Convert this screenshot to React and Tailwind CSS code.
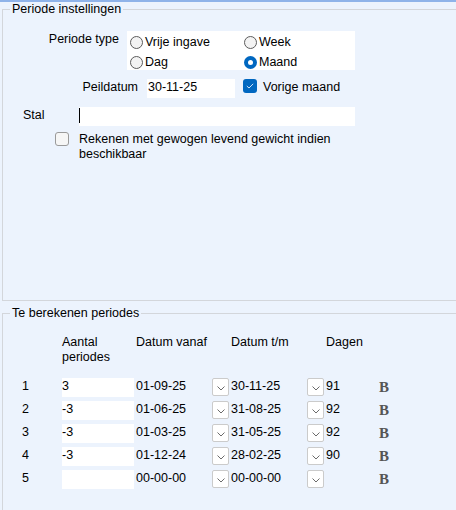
import React from "react";

const Radio = ({ checked, label }) => (
  <div className="flex items-center pl-[3px] h-[15px]">
    {checked ? (
      <span className="w-[13px] h-[13px] rounded-full bg-[#0067c0] flex items-center justify-center">
        <span className="w-[5px] h-[5px] rounded-full bg-white" />
      </span>
    ) : (
      <span className="w-[13px] h-[13px] rounded-full border border-[#5c5c5c] bg-[#f3f3f3]" />
    )}
    <span className="ml-[2px]">{label}</span>
  </div>
);

const Dropdown = () => (
  <div className="w-[17px] h-[18px] border border-[#cbcbcb] rounded-[2px] bg-white flex items-center justify-center">
    <svg width="8" height="5" viewBox="0 0 8 5" className="mt-[2px]">
      <polyline points="0.5,0.5 4,4 7.5,0.5" fill="none" stroke="#6b6b6b" strokeWidth="1" />
    </svg>
  </div>
);

const rows = [
  { n: "1", aantal: "3", van: "01-09-25", tm: "30-11-25", dagen: "91" },
  { n: "2", aantal: "-3", van: "01-06-25", tm: "31-08-25", dagen: "92" },
  { n: "3", aantal: "-3", van: "01-03-25", tm: "31-05-25", dagen: "92" },
  { n: "4", aantal: "-3", van: "01-12-24", tm: "28-02-25", dagen: "90" },
  { n: "5", aantal: "", van: "00-00-00", tm: "00-00-00", dagen: "" },
];

export default function App() {
  return (
    <div className="w-full h-[510px] overflow-hidden bg-[#ecf3fd] text-black text-[12.5px] leading-[15px] font-['Liberation_Sans',Arial,sans-serif]">
      <div className="h-[2px] bg-[#8fb3e9]" />

      {/* Periode instellingen */}
      <fieldset className="ml-[2px] h-[299px] border border-r-0 border-[#d3d6db] min-w-0">
        <legend className="ml-[7px] px-[2px] leading-[14px]">Periode instellingen</legend>

        <div className="flex mt-[15px]">
          <div className="w-[116px] text-right pt-[1px]">Periode type</div>
          <div className="ml-[8px] w-[228px] h-[39px] bg-white pt-[4px] grid grid-cols-[114px_1fr] gap-y-[5px]">
            <Radio label="Vrije ingave" />
            <Radio label="Week" />
            <Radio label="Dag" />
            <Radio checked label="Maand" />
          </div>
        </div>

        <div className="flex items-start mt-[9px] h-[19px]">
          <div className="w-[135px] text-right leading-[17px]">Peildatum</div>
          <div className="ml-[9px] w-[88px] h-[19px] bg-white pl-[1px] leading-[17px]">30-11-25</div>
          <div className="ml-[8px] w-[14px] h-[14px] rounded-[3px] bg-[#0067c0] flex items-center justify-center">
            <svg width="8" height="6" viewBox="0 0 8 6">
              <polyline points="0.8,3 3,5 7.2,0.8" fill="none" stroke="#cfe2f7" strokeWidth="1" />
            </svg>
          </div>
          <div className="ml-[6px] leading-[16px]">Vorige maand</div>
        </div>

        <div className="flex items-start mt-[9px]">
          <div className="w-[76px] pl-[20px] leading-[17px]">Stal</div>
          <div className="w-[276px] h-[19px] bg-white">
            <div className="w-[1px] h-[15px] mt-[1px] bg-black" />
          </div>
        </div>

        <div className="flex items-start mt-[6px]">
          <div className="ml-[52px] w-[14px] h-[14px] rounded-[3px] border border-[#9a9a9a] bg-[#f6f6f6]" />
          <div className="ml-[10px] w-[276px]">
            Rekenen met gewogen levend gewicht indien beschikbaar
          </div>
        </div>
      </fieldset>

      {/* Te berekenen periodes */}
      <fieldset className="ml-[2px] mt-[5px] h-[204px] border-l border-t border-[#d3d6db] min-w-0">
        <legend className="ml-[7px] px-[2px] leading-[14px]">Te berekenen periodes</legend>

        <div className="flex mt-[15px] pl-[59px]">
          <div className="w-[74px]">
            Aantal
            <br />
            periodes
          </div>
          <div className="w-[95px]">Datum vanaf</div>
          <div className="w-[95px]">Datum t/m</div>
          <div>Dagen</div>
        </div>

        <div className="flex flex-col gap-[4px] mt-[13px]">
          {rows.map((r) => (
            <div key={r.n} className="flex items-start h-[19px]">
              <div className="w-[59px] pl-[19px] leading-[17px]">{r.n}</div>
              <div className="w-[72px] h-[19px] bg-white leading-[17px]">{r.aantal}</div>
              <div className="ml-[2px] w-[76px] leading-[17px]">{r.van}</div>
              <Dropdown />
              <div className="ml-[2px] w-[76px] leading-[17px]">{r.tm}</div>
              <Dropdown />
              <div className="ml-[2px] w-[53px] leading-[17px]">{r.dagen}</div>
              <div className="font-['Liberation_Serif',serif] font-bold text-[15px] leading-[18px] text-[#555555]">
                B
              </div>
            </div>
          ))}
        </div>
      </fieldset>
    </div>
  );
}
